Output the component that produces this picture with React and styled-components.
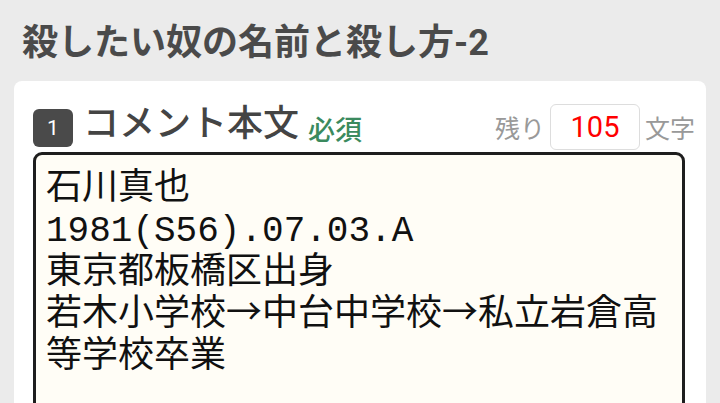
import React from 'react'
import styled, { createGlobalStyle } from 'styled-components'

const GlobalStyle = createGlobalStyle`
  html, body {
    margin: 0;
    padding: 0;
    background: #ebebeb;
    overflow: hidden;
  }
`

const lines = [
  '石川真也',
  '1981(S56).07.03.A',
  '東京都板橋区出身',
  '若木小学校→中台中学校→私立岩倉高',
  '等学校卒業',
]

// arrows are drawn full width in the original, so give them the CJK face
const renderLine = (line) =>
  line.split('→').flatMap((part, i) =>
    i === 0 ? [part] : [<Arrow key={i}>→</Arrow>, part]
  )

function App() {
  return (
    <Page>
      <GlobalStyle />
      <Title>殺したい奴の名前と殺し方-2</Title>
      <Card>
        <Header>
          <Label>
            <Badge>1</Badge>
            <LabelText>コメント本文</LabelText>
            <Required>必須</Required>
          </Label>
          <Counter>
            <CounterText>残り</CounterText>
            <CountBox>105</CountBox>
            <CounterText>文字</CounterText>
          </Counter>
        </Header>
        <Body>
          {lines.map((line, i) => (
            <Line key={i}>{renderLine(line)}</Line>
          ))}
        </Body>
      </Card>
    </Page>
  )
}

export default App

const Page = styled.div`
  width: 720px;
  height: 403px;
  overflow: hidden;
  padding: 0 14px;
  box-sizing: border-box;
  font-family: 'Roboto', 'Noto Sans CJK JP', sans-serif;
`

const Title = styled.h1`
  margin: 0;
  padding: 23px 0 0 8px;
  height: 81px;
  box-sizing: border-box;
  font-size: 36px;
  line-height: 40px;
  font-weight: 700;
  color: #4a4a4a;
`

const Card = styled.section`
  background: #fff;
  border-radius: 8px;
  padding: 23px 11px 0 19px;
  height: 400px;
  box-sizing: border-box;
`

const Header = styled.div`
  display: flex;
  align-items: center;
  justify-content: space-between;
  height: 46px;
  margin-bottom: 2px;
`

const Label = styled.div`
  display: flex;
  align-items: center;
`

const Badge = styled.span`
  display: flex;
  align-items: center;
  justify-content: center;
  width: 40px;
  height: 38px;
  margin: 1px 10px 0 0;
  border-radius: 6px;
  background: #4a4a4a;
  color: #fff;
  font-size: 21px;
`

const LabelText = styled.span`
  font-size: 36px;
  line-height: 40px;
  margin-bottom: 6px;
  color: #444;
  font-weight: 500;
`

const Required = styled.span`
  font-size: 27px;
  color: #3b8a5e;
  margin-left: 9px;
  margin-top: 2px;
  font-weight: 500;
`

const Counter = styled.div`
  display: flex;
  align-items: center;
  gap: 5px;
`

const CounterText = styled.span`
  font-size: 25px;
  color: #999;
`

const CountBox = styled.span`
  display: flex;
  align-items: center;
  justify-content: center;
  width: 90px;
  height: 46px;
  box-sizing: border-box;
  border: 1px solid #ddd;
  border-radius: 6px;
  color: #f00;
  font-size: 29px;
`

const Body = styled.div`
  margin-right: 10px;
  border: 3px solid #1e1e1e;
  border-radius: 9px;
  background: #fffdf6;
  padding: 14px 11px 11px 10px;
  height: 300px;
  font-family: 'Liberation Mono', 'Noto Sans CJK JP', monospace;
  font-size: 36px;
  line-height: 42px;
  color: #111;
`

const Line = styled.div`
  height: 42px;
  white-space: nowrap;
`

const Arrow = styled.span`
  font-family: 'Noto Sans CJK JP', sans-serif;
  line-height: 0;
`
